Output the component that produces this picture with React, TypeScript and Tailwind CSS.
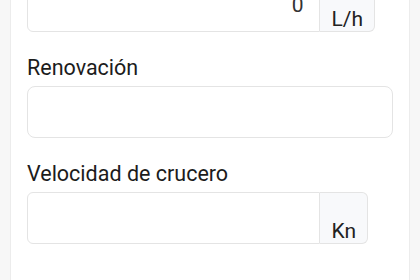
import React from "react";

function UnitInput({ value, unit }: { value?: string; unit: string }) {
  return (
    <div className="flex h-[52px]">
      <div className="flex flex-1 items-center justify-end rounded-l-md border border-[#e4e4e4] bg-white pr-4 text-[21px] text-[#333]">
        {value}
      </div>
      <div className="flex items-end rounded-r-md border border-l-0 border-[#e4e4e4] bg-[#f8f9fb] px-[11px] text-[21px] leading-[24px] text-[#222]">
        {unit}
      </div>
    </div>
  );
}

function Label({ children }: { children: React.ReactNode }) {
  return (
    <div className="mt-[22px] mb-[4px] text-[21.5px] leading-[28px] font-normal text-[#1c1c1c]">
      {children}
    </div>
  );
}

export default function App() {
  return (
    <div className="min-h-screen overflow-hidden bg-[#f7f7f7] px-[10px] font-['Roboto',sans-serif]">
      <div className="-mt-[20px] h-[320px] border-x border-[#ececec] bg-white px-4">
        <div className="w-[348px]">
          <UnitInput value="0" unit="L/h" />
        </div>
        <Label>Renovación</Label>
        <div className="h-[52px] rounded-lg border border-[#e4e4e4] bg-white" />
        <Label>Velocidad de crucero</Label>
        <div className="w-[341px]">
          <UnitInput unit="Kn" />
        </div>
      </div>
    </div>
  );
}
